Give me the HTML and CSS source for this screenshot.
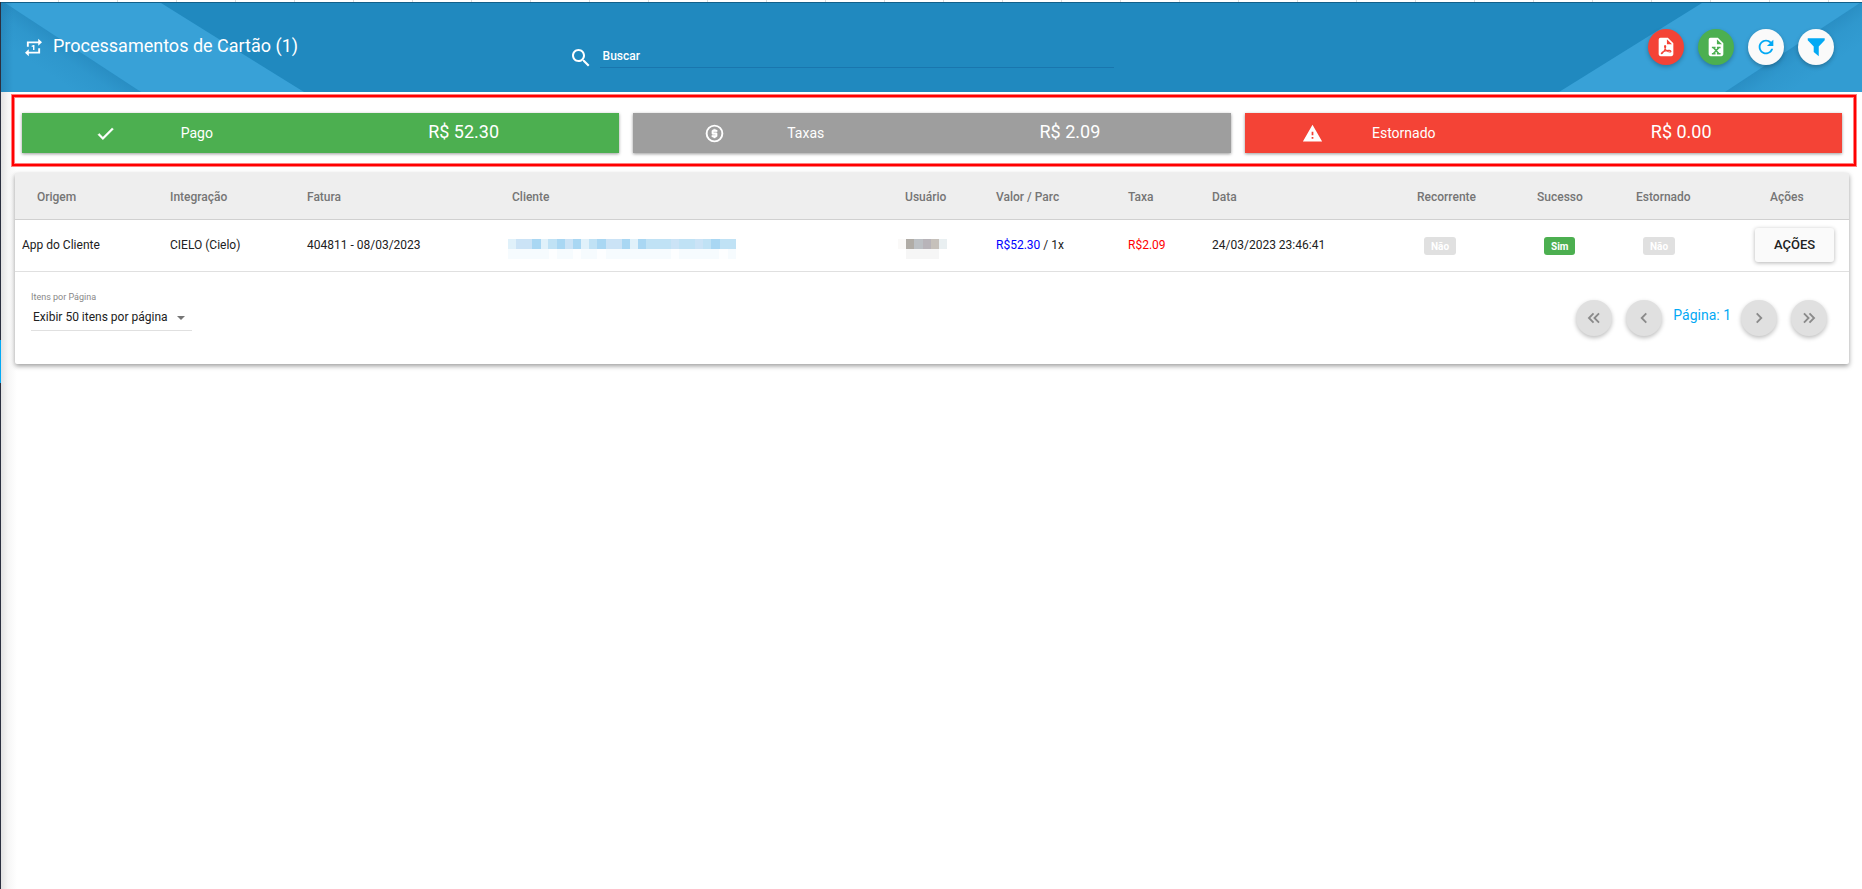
FILE: index.html
```html
<!DOCTYPE html>
<html lang="pt-BR">
<head>
<meta charset="utf-8">
<title>Processamentos de Cartão</title>
<link rel="stylesheet" href="styles.css">
</head>
<body>
<div class="tab-strip"></div>
<div class="shell">
  <div class="sidebar-edge"><span class="sidebar-active"></span></div>
  <div class="page">
    <header class="topbar">
      <svg class="stripe stripe-left" viewBox="0 0 303 89" preserveAspectRatio="none" aria-hidden="true">
        <defs>
          <linearGradient id="edge" x1="0" y1="0" x2="1" y2="0"><stop offset="0" stop-color="#1f78ab" stop-opacity=".5"/><stop offset="1" stop-color="#1f78ab" stop-opacity="0"/></linearGradient>
          <linearGradient id="sh" gradientUnits="userSpaceOnUse" x1="70" y1="43" x2="50" y2="73"><stop offset="0" stop-color="#1b76aa" stop-opacity=".35"/><stop offset=".4" stop-color="#1b76aa" stop-opacity=".12"/><stop offset="1" stop-color="#1b76aa" stop-opacity="0"/></linearGradient>
        </defs>
        <path d="M0 0H4L140 89H0Z" fill="#319bd1"/>
        <path d="M0 0H4L140 89H0Z" fill="url(#sh)"/>
        <path d="M4 0H160L303 89H140Z" fill="#38a1d7"/>
        <path d="M0 0H12V89H0Z" fill="url(#edge)"/>
      </svg>
      <svg class="stripe stripe-right" viewBox="0 0 303 89" preserveAspectRatio="none" aria-hidden="true">
        <defs>
          <linearGradient id="sr" gradientUnits="userSpaceOnUse" x1="234" y1="44" x2="254" y2="74"><stop offset="0" stop-color="#1b76aa" stop-opacity=".35"/><stop offset=".4" stop-color="#1b76aa" stop-opacity=".12"/><stop offset="1" stop-color="#1b76aa" stop-opacity="0"/></linearGradient>
        </defs>
        <path d="M303 0H301L166 89H303Z" fill="#329cd2"/>
        <path d="M303 0H301L166 89H303Z" fill="url(#sr)"/>
        <path d="M301 0H143L0 89H166Z" fill="#38a1d7"/>
      </svg>
      <h1 class="title">
        <svg class="title-icon" viewBox="3 1 18 22" preserveAspectRatio="none" aria-hidden="true"><path fill="currentColor" d="M7 7h10v3l4-4-4-4v3H5v6h2V7zm10 10H7v-3l-4 4 4 4v-3h12v-6h-2v4zm-4-2V9h-1l-2 1v1h1.500v4H13z"/></svg>
        Processamentos de Cartão (1)
      </h1>
      <div class="search">
        <svg class="icon24" viewBox="0 0 24 24" aria-hidden="true"><path fill="currentColor" d="M15.500 14h-.790l-.280-.270C15.410 12.590 16 11.110 16 9.500 16 5.910 13.090 3 9.500 3S3 5.910 3 9.500 5.910 16 9.500 16c1.610 0 3.090-.590 4.230-1.570l.270.280v.790l5 4.990L20.490 19l-4.990-5zm-6 0C7.010 14 5 11.990 5 9.500S7.010 5 9.500 5 14 7.010 14 9.500 11.990 14 9.500 14z"/></svg>
        <input class="search-input" type="text" placeholder="Buscar" aria-label="Buscar">
      </div>
      <div class="tools">
        <button class="round red" aria-label="Exportar PDF"><svg class="file-icon" viewBox="0 0 24 24"><path fill="#fff" fill-rule="evenodd" d="M14 2H6a2 2 0 0 0-2 2v16a2 2 0 0 0 2 2h12a2 2 0 0 0 2-2V8l-6-6zm-1 7V3.500L18.500 9H13z"/><path fill="none" stroke="#f44336" stroke-width="1.200" d="M11 10.500c-1 0-.500 2.500.600 4.200 1.200 1.800 3 2.800 4.600 2.800 1.800 0 1.500-1.600-.400-1.800-2.500-.200-6 .700-8 2.100-1.600 1.200-1 2 .200 1 1.500-1.300 3.200-4.400 3.600-6.600.200-1.200-.100-1.700-.600-1.700z"/></svg></button>
        <button class="round green" aria-label="Exportar Excel"><svg class="file-icon" viewBox="0 0 24 24"><path fill="#fff" fill-rule="evenodd" d="M14 2H6a2 2 0 0 0-2 2v16a2 2 0 0 0 2 2h12a2 2 0 0 0 2-2V8l-6-6zm-1 7V3.500L18.500 9H13z"/><path fill="none" stroke="#4caf50" stroke-width="1.700" d="M7.500 12.500h4M13 12.500h4M7.500 19.300h4M13 19.300h4M9.300 12.700l5.700 6.500M15 12.700l-5.700 6.500"/></svg></button>
        <button class="round white" aria-label="Atualizar"><svg class="icon24" viewBox="0 0 24 24"><path fill="currentColor" d="M17.650 6.350C16.200 4.900 14.210 4 12 4c-4.420 0-7.990 3.580-7.990 8s3.570 8 7.990 8c3.730 0 6.840-2.550 7.730-6h-2.080c-.820 2.330-3.040 4-5.650 4-3.310 0-6-2.690-6-6s2.690-6 6-6c1.660 0 3.140.690 4.220 1.780L13 11h7V4l-2.350 2.350z"/></svg></button>
        <button class="round white" aria-label="Filtrar"><svg class="icon24" viewBox="0 0 24 24"><path fill="currentColor" d="M3 2.500h18.500v2L15 11.500V22l-5.500-4.500v-6L3 4.500z"/></svg></button>
      </div>
    </header>

    <main class="content">
      <section class="summary">
        <div class="stat green">
          <div class="stat-label"><span class="stat-icon"><svg class="icon24" viewBox="0 0 24 24" aria-hidden="true"><path fill="currentColor" stroke="currentColor" stroke-width=".6" d="M9 16.200L4.800 12l-1.400 1.400L9 19 21 7l-1.400-1.400L9 16.200z"/></svg></span><span>Pago</span></div>
          <div class="stat-value">R$ 52.30</div>
        </div>
        <div class="stat gray">
          <div class="stat-label"><span class="stat-icon"><svg class="icon24" viewBox="0 0 24 24" aria-hidden="true"><circle cx="12" cy="12" r="9" fill="none" stroke="currentColor" stroke-width="2.200"/><path fill="currentColor" stroke="currentColor" stroke-width=".5" d="M11 17h2v-1h1c.550 0 1-.450 1-1v-3c0-.550-.450-1-1-1h-3v-1h4V8h-2V7h-2v1h-1c-.550 0-1 .450-1 1v3c0 .550.450 1 1 1h3v1H9v2h2v1z"/></svg></span><span>Taxas</span></div>
          <div class="stat-value">R$ 2.09</div>
        </div>
        <div class="stat red">
          <div class="stat-label"><span class="stat-icon"><svg class="icon24" viewBox="0 0 24 24" aria-hidden="true"><path fill="currentColor" d="M1 21h22L12 2 1 21zM13 18h-2v-2h2v2zm0-4h-2v-4h2v4z"/></svg></span><span>Estornado</span></div>
          <div class="stat-value">R$ 0.00</div>
        </div>
      </section>

      <section class="panel">
        <table class="grid">
          <colgroup>
            <col class="c-origem"><col class="c-integ"><col class="c-fatura"><col class="c-cliente"><col class="c-usuario"><col class="c-valor"><col class="c-taxa"><col class="c-data"><col class="c-rec"><col class="c-suc"><col class="c-est"><col class="c-acoes">
          </colgroup>
          <thead>
            <tr><th class="in22">Origem</th><th>Integração</th><th>Fatura</th><th class="in11">Cliente</th><th class="in14">Usuário</th><th>Valor / Parc</th><th>Taxa</th><th>Data</th><th>Recorrente</th><th>Sucesso</th><th>Estornado</th><th class="in22">Ações</th></tr>
          </thead>
          <tbody>
            <tr>
              <td>App do Cliente</td><td>CIELO (Cielo)</td><td>404811 - 08/03/2023</td>
              <td><svg class="mosaic" width="228" height="20" aria-hidden="true">
                <rect width="228" height="10" fill="#c0e2f5"/><rect y="10" width="228" height="10" fill="#f6fbfe"/>
                <path fill="#e0f1fa" d="M0 0h8v10H0zM32 0h8v10h-8zM73 0h8v10h-8zM122 0h8v10h-8z"/>
                <path fill="#a9d7f3" d="M24 0h9v10h-9zM49 0h8v10h-8zM65 0h8v10h-8zM89 0h9v10h-9zM114 0h8v10h-8zM130 0h8v10h-8zM203 0h9v10h-9z"/>
                <path fill="#cbe3f6" d="M8 0h16v10H8zM57 0h8v10h-8zM98 0h16v10H98zM163 0h8v10h-8zM187 0h8v10h-8z"/>
                <path fill="#fdfeff" d="M41 10h8v10h-8zM65 10h8v10h-8zM89 10h9v10h-9zM163 10h8v10h-8zM211 10h9v10h-9z"/>
              </svg></td>
              <td><svg class="mosaic" width="49" height="20" aria-hidden="true">
                <path fill="#faf9f8" d="M0 0h8v10H0z"/><path fill="#b0aca6" d="M8 0h8v10H8z"/><path fill="#bcc0c4" d="M16 0h9v10h-9z"/><path fill="#b8b4b9" d="M25 0h8v10h-8z"/><path fill="#c6c1bb" d="M33 0h8v10h-8z"/><path fill="#e9eff1" d="M41 0h8v10h-8z"/><path fill="#f6f6f6" d="M8 10h33v10H8z"/>
              </svg></td>
              <td><span class="blue">R$52.30</span> / 1x</td><td class="neg">R$2.09</td><td>24/03/2023 23:46:41</td>
              <td class="in14"><span class="badge off">Não</span></td><td class="in14"><span class="badge on">Sim</span></td><td class="in14"><span class="badge off">Não</span></td>
              <td><button class="action">AÇÕES</button></td>
            </tr>
          </tbody>
        </table>
        <footer class="pager">
          <div class="per-page">
            <label class="per-label" for="per">Itens por Página</label>
            <div class="select-wrap">
              <select class="per-select" id="per"><option>Exibir 50 itens por página</option></select>
            </div>
          </div>
          <nav class="pages">
            <button class="round off" aria-label="Primeira" disabled><svg class="chev" viewBox="0 0 24 24"><path d="M11.500 7l-5 5 5 5M17.500 7l-5 5 5 5"/></svg></button>
            <button class="round off" aria-label="Anterior" disabled><svg class="chev" viewBox="0 0 24 24"><path d="M14.500 7l-5 5 5 5"/></svg></button>
            <span class="page-no">Página: 1</span>
            <button class="round off" aria-label="Próxima" disabled><svg class="chev" viewBox="0 0 24 24"><path d="M9.500 7l5 5-5 5"/></svg></button>
            <button class="round off" aria-label="Última" disabled><svg class="chev" viewBox="0 0 24 24"><path d="M6.500 7l5 5-5 5M12.500 7l5 5-5 5"/></svg></button>
          </nav>
        </footer>
      </section>
    </main>
  </div>
</div>
</body>
</html>
```
FILE: styles.css
```css
* { box-sizing: border-box; }
body { margin: 0; min-height: 100vh; display: flex; flex-direction: column; background: #fff; font-family: Roboto, "Liberation Sans", sans-serif; font-size: 12px; color: #212121; }
button { border: 0; padding: 0; font-family: inherit; }
svg { display: block; }
.tab-strip { height: 2px; background: repeating-linear-gradient(90deg, #fff 0 58px, #dcdcdc 58px 59px); }
.shell { flex: 1; display: flex; }
.sidebar-edge { width: 1px; background: #2b3040; padding-top: 338px; }
.sidebar-active { display: block; height: 43px; background: #03a9f4; }
.page { flex: 1; min-width: 0; background: linear-gradient(90deg, #e2e2e2, #f6f6f6 7px, #fff 16px); }

.topbar { position: relative; height: 90px; background: #2089bf; border-top: 1px solid #12608a; color: #fff; display: grid; grid-template-columns: 30.5% 1fr 31%; align-items: start; }
.stripe { position: absolute; top: 0; height: 89px; width: 303px; }
.stripe-left { left: 0; }
.stripe-right { right: 0; }
.title { position: relative; margin: 0; padding: 31px 0 0 24px; display: flex; align-items: center; gap: 11px; font-size: 18px; line-height: 24px; font-weight: 400; }
.title-icon { width: 17px; height: 19px; margin-top: 2px; }
.search { display: flex; align-items: center; gap: 7px; padding-top: 39px; }
.search .icon24 { margin-top: 4px; }
.icon24 { width: 24px; height: 24px; flex: none; }
.search-input { width: 514px; height: 24px; padding: 0 3px; border: 0; border-bottom: 1px solid #1976ae; background: none; color: #fff; font: 500 12px/16px Roboto, sans-serif; outline: 0; }
.search-input::placeholder { color: #fff; opacity: 1; }
.tools { position: relative; display: flex; justify-content: flex-end; gap: 14px; padding: 26px 28px 0 0; }
.round { width: 36px; height: 36px; border-radius: 50%; display: flex; align-items: center; justify-content: center; box-shadow: 0 2px 4px rgba(0,0,0,.25); }
.green { background: #4caf50; }
.red { background: #f44336; }
.gray { background: #9e9e9e; }
.white { background: #fafafa; color: #03a9f4; }
.tools .white .icon24 { width: 22px; height: 22px; }
.file-icon { width: 22px; height: 22px; }

.content { padding: 3px 6px 0 11px; }
.summary { display: grid; grid-template-columns: repeat(3, 1fr); gap: 14px; padding: 16px 12px 11px 8px; border: 2px solid #f00; box-shadow: 0 0 0 1px #ff7f7f, inset 0 0 0 1px #ff7f7f; }
.stat { height: 40px; display: grid; grid-template-columns: 68% 32%; align-items: center; color: #fff; box-shadow: 0 1px 3px rgba(0,0,0,.4); }
.stat-label { width: 47%; padding-left: 8px; display: flex; align-items: center; font-size: 14px; }
.stat-icon { flex: 1; display: flex; justify-content: center; }
.stat-icon .icon24 { width: 21px; height: 21px; }
.stat-value { font-size: 18px; line-height: 24px; padding-bottom: 2px; }

.panel { margin: 7px 7px 0 3px; background: #fff; border-radius: 2px; box-shadow: 0 2px 5px rgba(0,0,0,.4); }
.grid { width: 100%; border-collapse: collapse; table-layout: fixed; }
.grid th, .grid td { text-align: left; padding: 0 0 0 7px; white-space: nowrap; }
.grid th { height: 46px; padding-top: 2px; background: #eee; border-bottom: 1px solid #d0d0d0; color: #757575; font-weight: 500; }
.grid td { height: 52px; border-bottom: 1px solid #e0e0e0; }
.grid .in11 { padding-left: 11px; }
.grid .in14 { padding-left: 14px; }
.grid .in22 { padding-left: 22px; }
.c-origem { width: 8.07%; }
.c-integ { width: 7.47%; }
.c-fatura { width: 10.96%; }
.c-cliente { width: 21.27%; }
.c-usuario { width: 5.34%; }
.c-valor { width: 7.2%; }
.c-taxa { width: 4.58%; }
.c-data { width: 11.18%; }
.c-rec { width: 6.54%; }
.c-suc { width: 5.4%; }
.c-est { width: 6.49%; }
.c-acoes { width: 5.5%; }
.mosaic { margin-top: 7px; }
.blue { color: #00f; }
.grid .neg { color: #f00; }
.badge { display: inline-block; height: 18px; padding: 0 7px; border-radius: 3px; color: #fff; font-size: 10px; line-height: 19px; font-weight: 700; vertical-align: middle; margin-top: 2px; }
.badge.off { background: #e0e0e0; }
.badge.on { background: #4caf50; }
.action { width: 79px; height: 34px; padding-bottom: 2px; border-radius: 3px; background: #fafafa; color: #212121; font-size: 13px; font-weight: 500; box-shadow: 0 1px 4px rgba(0,0,0,.3); }

.pager { display: flex; justify-content: space-between; align-items: flex-start; padding: 18px 22px 0 16px; min-height: 92px; }
.per-label { display: block; font-size: 9px; line-height: 14px; color: #888; }
.select-wrap { width: 161px; position: relative; }
.select-wrap::after { content: ""; position: absolute; right: 7px; top: 12px; border: 4px solid transparent; border-top-color: #757575; border-bottom: 0; pointer-events: none; }
.per-select { width: 100%; height: 27px; padding: 0 0 0 2px; border: 0; border-bottom: 1px solid #e0e0e0; appearance: none; background: none; color: #212121; font: 12px/16px Roboto, sans-serif; }
.pages { display: flex; align-items: center; gap: 14px; padding-top: 10px; }
.round.off { background: #e0e0e0; color: #8a8a8a; }
.chev { width: 22px; height: 22px; fill: none; stroke: currentColor; stroke-width: 2; }
.page-no { margin: 0 -4px 0 -3px; padding-bottom: 6px; font-size: 14px; color: #03a9f4; }
```
